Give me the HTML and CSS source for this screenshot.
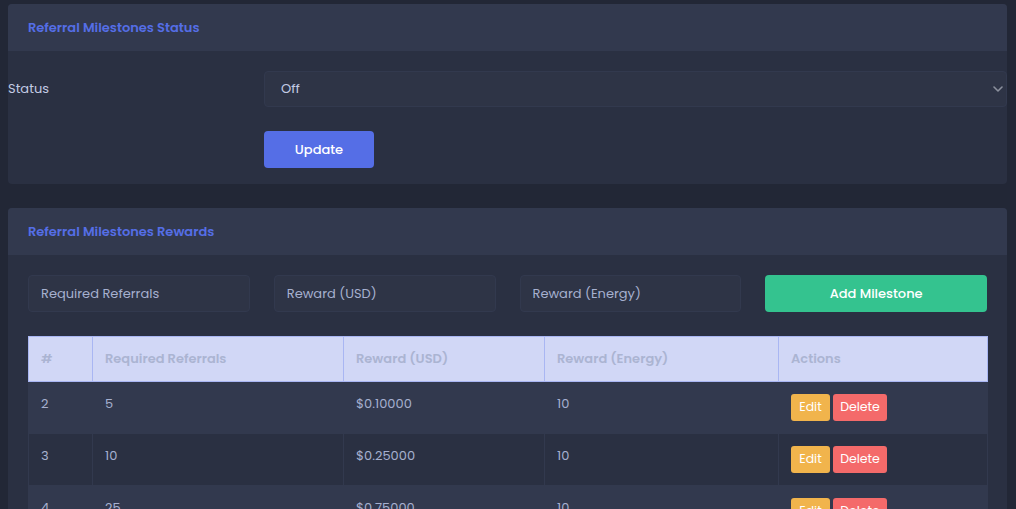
FILE: index.html
```html
<!DOCTYPE html>
<html lang="en">
<head>
<meta charset="utf-8">
<title>Referral Milestones</title>
<link rel="stylesheet" href="styles.css">
</head>
<body>
<div class="page">
  <section class="card">
    <div class="card-header"><h4 class="card-title">Referral Milestones Status</h4></div>
    <div class="card-body status-body">
      <form class="status-form">
        <label class="form-label" for="status">Status</label>
        <div class="select-wrap">
          <select id="status" class="form-select">
            <option>Off</option>
            <option>On</option>
          </select>
          <svg class="chevron" width="10" height="6" viewBox="0 0 10 6"><path d="M1 1l4 4 4-4" fill="none" stroke="#8b909d" stroke-width="1.6" stroke-linecap="round" stroke-linejoin="round"/></svg>
        </div>
        <div class="form-actions"><button type="button" class="btn btn-primary">Update</button></div>
      </form>
    </div>
  </section>

  <section class="card">
    <div class="card-header"><h4 class="card-title">Referral Milestones Rewards</h4></div>
    <div class="card-body rewards-body">
      <form class="add-form">
        <input class="form-control" type="text" placeholder="Required Referrals">
        <input class="form-control" type="text" placeholder="Reward (USD)">
        <input class="form-control" type="text" placeholder="Reward (Energy)">
        <button type="button" class="btn btn-success">Add Milestone</button>
      </form>
      <table class="table">
        <colgroup>
          <col class="c1"><col class="c2"><col class="c3"><col class="c4"><col class="c5">
        </colgroup>
        <thead>
          <tr><th>#</th><th>Required Referrals</th><th>Reward (USD)</th><th>Reward (Energy)</th><th>Actions</th></tr>
        </thead>
        <tbody>
          <tr><td>2</td><td>5</td><td>$0.10000</td><td>10</td><td><div class="actions"><button class="btn-sm btn-warning">Edit</button><button class="btn-sm btn-danger">Delete</button></div></td></tr>
          <tr><td>3</td><td>10</td><td>$0.25000</td><td>10</td><td><div class="actions"><button class="btn-sm btn-warning">Edit</button><button class="btn-sm btn-danger">Delete</button></div></td></tr>
          <tr><td>4</td><td>25</td><td>$0.75000</td><td>10</td><td><div class="actions"><button class="btn-sm btn-warning">Edit</button><button class="btn-sm btn-danger">Delete</button></div></td></tr>
        </tbody>
      </table>
    </div>
  </section>
</div>
</body>
</html>
```

FILE: styles.css
```css
* { box-sizing: border-box; }
html, body { margin: 0; padding: 0; }
body {
  background: #222736;
  font-family: "Poppins", "Inter", "Liberation Sans", sans-serif;
  font-size: 13px;
  line-height: 1.5;
  color: #a6b0cf;
  overflow: hidden;
}
.page {
  padding: 4px 9px 0 8px;
  display: flex;
  flex-direction: column;
  gap: 24px;
}
.card {
  background: #2a3042;
  border-radius: 4px;
}
.card-header {
  height: 47px;
  background: #32394e;
  padding: 0 20px;
  display: flex;
  align-items: center;
  border-radius: 4px 4px 0 0;
}
.card-title {
  margin: 0;
  font-size: 13px;
  font-weight: 600;
  color: #556ee6;
  padding-top: 1px;
}
.status-body { padding: 20px 0 16px; }
.status-form {
  display: grid;
  grid-template-columns: 256px 1fr;
  row-gap: 24px;
  align-items: center;
}
.form-label { color: #c3cbe4; font-size: 13px; }
.select-wrap { position: relative; }
.form-select {
  width: 100%;
  height: 36px;
  appearance: none;
  -webkit-appearance: none;
  background: #2e3446;
  border: 1px solid #32394e;
  border-radius: 4px;
  color: #c3cbe4;
  font: inherit;
  padding: 0 16px;
  outline: none;
}
.chevron { position: absolute; right: 4px; top: 15px; }
.form-actions { grid-column: 2; }
.btn {
  border: none;
  border-radius: 4px;
  font: inherit;
  font-size: 13px;
  font-weight: 500;
  color: #fff;
  height: 37px;
}
.btn-primary { background: #556ee6; width: 110px; }
.btn-success { background: #34c38f; }
.rewards-body { padding: 20px 20px; }
.add-form {
  display: grid;
  grid-template-columns: repeat(4, 1fr);
  gap: 24px;
  margin-bottom: 24px;
}
.form-control {
  height: 37px;
  background: #2e3446;
  border: 1px solid #32394e;
  border-radius: 4px;
  padding: 0 12px;
  font: inherit;
  color: #c3cbe4;
  outline: none;
  min-width: 0;
}
.form-control::placeholder { color: #a6b0cf; opacity: 1; }
.table {
  width: 959px;
  border-collapse: collapse;
  table-layout: fixed;
}
.c1 { width: 64px; }
.c2 { width: 251px; }
.c3 { width: 201px; }
.c4 { width: 234px; }
.c5 { width: 209px; }
.table th {
  background: #d1d7f6;
  border: 1px solid #a9b6f3;
  color: #abb4d2;
  font-weight: 600;
  text-align: left;
  padding: 12px 12px;
  height: 44px;
}
.table td {
  padding: 12px 12px;
  vertical-align: top;
  border: 1px solid #32394e;
  color: #a6b0cf;
}
.table tbody tr:nth-child(odd) td { background: #32394e; }
.table tbody tr:nth-child(even) td { background: #2a3042; }
.actions { display: flex; gap: 3px; }
.btn-sm {
  border: none;
  border-radius: 3px;
  font: inherit;
  font-size: 12.5px;
  color: #fff;
  height: 27px;
  padding: 0;
}
.btn-warning { background: #f1b44c; width: 39px; }
.btn-danger { background: #f46a6a; width: 54px; }
```
